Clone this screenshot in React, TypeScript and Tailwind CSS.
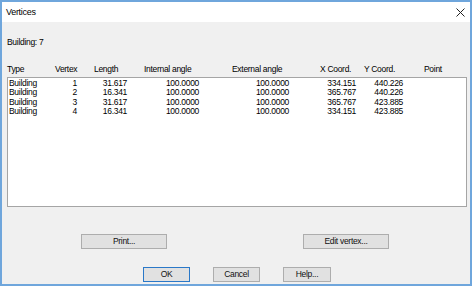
import React from "react";

const rows = [
  ["Building", "1", "31.617", "100.0000", "100.0000", "334.151", "440.226", ""],
  ["Building", "2", "16.341", "100.0000", "100.0000", "365.767", "440.226", ""],
  ["Building", "3", "31.617", "100.0000", "100.0000", "365.767", "423.885", ""],
  ["Building", "4", "16.341", "100.0000", "100.0000", "334.151", "423.885", ""],
];

const grid = "grid grid-cols-[48px_39px_50px_88px_88px_44px_60px_42px]";

function Btn({ label, className = "" }: { label: string; className?: string }) {
  return (
    <div
      className={
        "flex items-center justify-center bg-[#e1e1e1] border border-[#adadad] text-[8.5px] leading-none text-[#111] " +
        className
      }
    >
      {label}
    </div>
  );
}

export default function App() {
  return (
    <div
      className="w-[472px] h-[286px] flex flex-col border-2 border-[#6fa6dc] bg-[#f0f0f0] overflow-hidden text-black"
      style={{ fontFamily: '"Liberation Sans", Arial, sans-serif', letterSpacing: "-0.3px" }}
    >
      <div className="h-[20px] bg-white flex items-center justify-between pl-[4px] pr-[5px] shrink-0">
        <span className="text-[9px] leading-none">Vertices</span>
        <svg width="9" height="9" viewBox="0 0 9 9" className="mb-[-1px]">
          <path d="M0.5 0.5 L8.5 8.5 M8.5 0.5 L0.5 8.5" stroke="#222" strokeWidth="1" />
        </svg>
      </div>
      <div className="flex-1 flex flex-col pl-[5px] pr-[3px] text-[8.5px] leading-[10px]">
        <div className="mt-[15px]">Building: 7</div>
        <div className={grid + " mt-[17px]"}>
          <div>Type</div>
          <div>Vertex</div>
          <div>Length</div>
          <div>Internal angle</div>
          <div>External angle</div>
          <div>X Coord.</div>
          <div>Y Coord.</div>
          <div>Point</div>
        </div>
        <div className="mt-[3px] h-[130px] bg-white border border-[#a5a5a5] pt-[1px]">
          {rows.map((r, i) => (
            <div key={i} className={grid + " leading-[9.3px]"}>
              <div className="pl-[1px]">{r[0]}</div>
              <div className="text-right pr-[18px]">{r[1]}</div>
              <div className="text-right pr-[18px]">{r[2]}</div>
              <div className="text-right pr-[34px]">{r[3]}</div>
              <div className="text-right pr-[32px]">{r[4]}</div>
              <div className="text-right pr-[9px]">{r[5]}</div>
              <div className="text-right pr-[22px]">{r[6]}</div>
              <div>{r[7]}</div>
            </div>
          ))}
        </div>
        <div className="mt-[27px] flex">
          <Btn label="Print..." className="ml-[74px] w-[86px] h-[15px]" />
          <Btn label="Edit vertex..." className="ml-[136px] w-[86px] h-[15px]" />
        </div>
        <div className="mt-[18px] flex">
          <Btn label="OK" className="ml-[136px] w-[47px] h-[15px] !border-[#2a78c8] border-[1.5px]" />
          <Btn label="Cancel" className="ml-[23px] w-[47px] h-[15px]" />
          <Btn label="Help..." className="ml-[23px] w-[48px] h-[15px]" />
        </div>
      </div>
    </div>
  );
}
